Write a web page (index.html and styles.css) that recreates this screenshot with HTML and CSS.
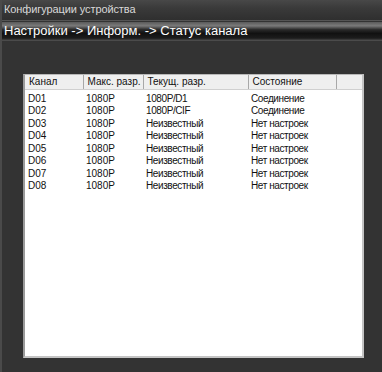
FILE: index.html
```html
<!DOCTYPE html>
<html lang="ru">
<head>
    <meta charset="UTF-8">
    <title>Конфигурации устройства</title>
    <link rel="stylesheet" href="styles.css">
</head>
<body>
    <div class="window">
        <div class="titlebar">Конфигурации устройства</div>
        <div class="crumbs">Настройки -&gt; Информ. -&gt; Статус канала</div>

        <div class="panel">
            <table class="grid">
                <thead>
                    <tr>
                        <th class="c1">Канал</th>
                        <th class="c2">Макс. разр.</th>
                        <th class="c3">Текущ. разр.</th>
                        <th class="c4">Состояние</th>
                        <th class="c5"></th>
                    </tr>
                </thead>
                <tbody>
                    <tr><td>D01</td><td>1080P</td><td>1080P/D1</td><td>Соединение</td><td></td></tr>
                    <tr><td>D02</td><td>1080P</td><td>1080P/CIF</td><td>Соединение</td><td></td></tr>
                    <tr><td>D03</td><td>1080P</td><td>Неизвестный</td><td>Нет настроек</td><td></td></tr>
                    <tr><td>D04</td><td>1080P</td><td>Неизвестный</td><td>Нет настроек</td><td></td></tr>
                    <tr><td>D05</td><td>1080P</td><td>Неизвестный</td><td>Нет настроек</td><td></td></tr>
                    <tr><td>D06</td><td>1080P</td><td>Неизвестный</td><td>Нет настроек</td><td></td></tr>
                    <tr><td>D07</td><td>1080P</td><td>Неизвестный</td><td>Нет настроек</td><td></td></tr>
                    <tr><td>D08</td><td>1080P</td><td>Неизвестный</td><td>Нет настроек</td><td></td></tr>
                </tbody>
            </table>
        </div>
    </div>
</body>
</html>
```

FILE: styles.css
```css
html, body {
    margin: 0;
    padding: 0;
    background: #333333;
}

.window {
    width: 382px;
    height: 372px;
    background: #333333;
    border-left: 2px solid #4a4a4a;
    box-sizing: border-box;
    font-family: "Liberation Sans", Arial, sans-serif;
    overflow: hidden;
}

.titlebar {
    height: 20px;
    line-height: 19px;
    padding-left: 2px;
    font-size: 11px;
    letter-spacing: -0.1px;
    color: #d8d8d8;
    background: linear-gradient(#484848, #3a3a3a 40%, #2f2f2f);
    border-bottom: 1px solid #555;
}

.crumbs {
    height: 19px;
    line-height: 18px;
    margin-top: 1px;
    padding-left: 2px;
    font-size: 13px;
    color: #ffffff;
    background: linear-gradient(#5a5a5a, #7a7a7a 20%, #2a2a2a 40%, #111 60%, #1c1c1c 85%, #555);
}

.panel {
    margin: 33px 18px 0 21px;
    height: 281px;
    background: #ffffff;
    border-top: 1px solid #b8b8b8;
    border-left: 2px solid #9a9a9a;
    border-right: 2px solid #c4c4c4;
    border-bottom: 2px solid #c4c4c4;
}

.grid {
    width: 100%;
    border-collapse: collapse;
    table-layout: fixed;
    font-size: 10px;
    color: #111;
}

.grid th {
    box-sizing: border-box;
    height: 14px;
    padding: 0 0 0 4px;
    font-weight: normal;
    text-align: left;
    background: #efefef;
    border-right: 1px solid #a8a8a8;
    border-bottom: 1px solid #d0d0d0;
    white-space: nowrap;
    overflow: hidden;
}

.grid th.c5 {
    border-right: none;
}

.grid .c1 { width: 58px; }
.grid .c2 { width: 60px; }
.grid .c3 { width: 105px; }
.grid .c4 { width: 88px; }

.grid td {
    height: 12.5px;
    padding: 0 0 0 3px;
    line-height: 12px;
    white-space: nowrap;
}

.grid td:nth-child(3),
.grid td:nth-child(4) {
    letter-spacing: -0.4px;
}

.grid tbody tr:first-child td {
    padding-top: 3px;
}
```
